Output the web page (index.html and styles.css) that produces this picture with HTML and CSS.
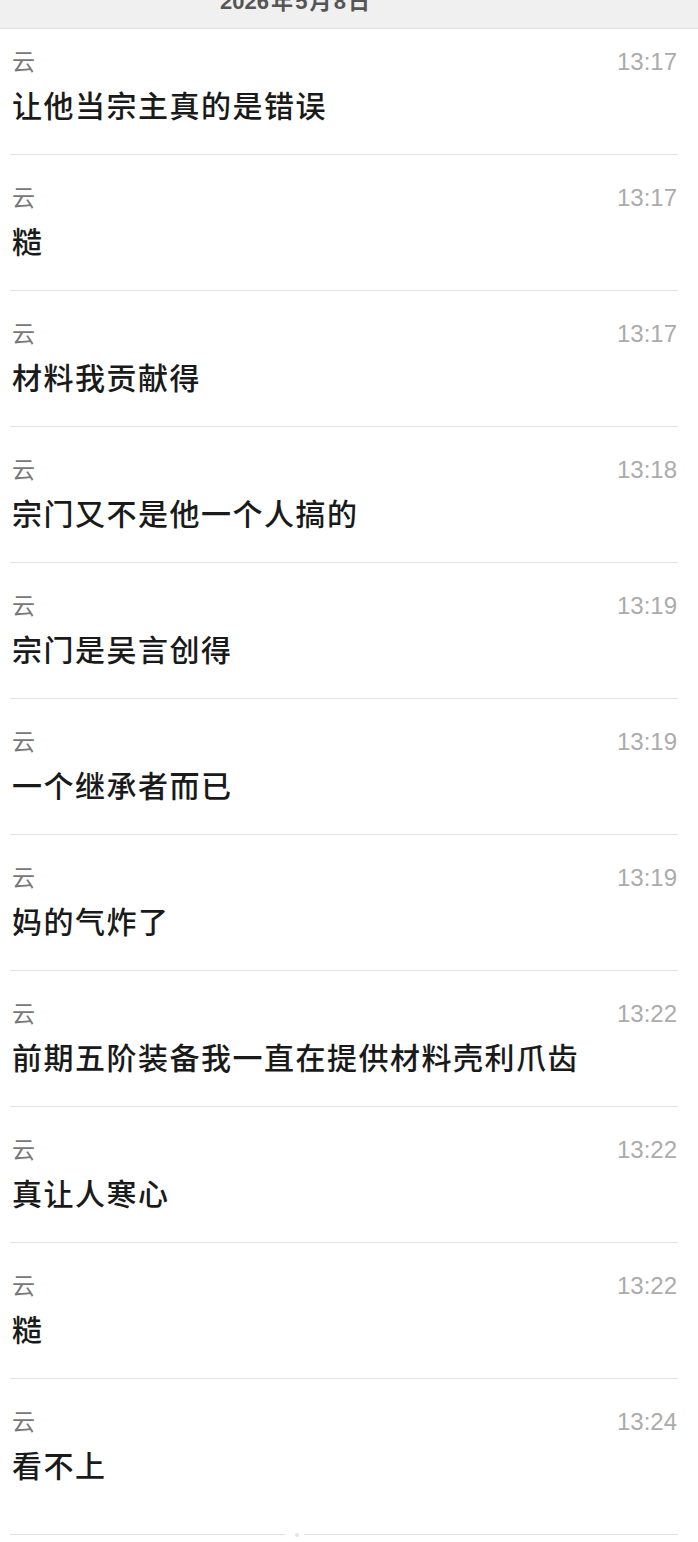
FILE: index.html
```html
<!DOCTYPE html>
<html lang="zh-CN">
<head>
<meta charset="UTF-8">
<title>聊天记录</title>
<link rel="stylesheet" href="styles.css">
</head>
<body>

<div class="date-bar">
    <div class="date-text">2026 年 5 月 8 日</div>
</div>

<div class="list">
    <div class="msg first">
        <div class="meta"><span class="name">云</span><span class="time">13:17</span></div>
        <div class="text">让他当宗主真的是错误</div>
    </div>
    <div class="msg">
        <div class="meta"><span class="name">云</span><span class="time">13:17</span></div>
        <div class="text">糙</div>
    </div>
    <div class="msg">
        <div class="meta"><span class="name">云</span><span class="time">13:17</span></div>
        <div class="text">材料我贡献得</div>
    </div>
    <div class="msg">
        <div class="meta"><span class="name">云</span><span class="time">13:18</span></div>
        <div class="text">宗门又不是他一个人搞的</div>
    </div>
    <div class="msg">
        <div class="meta"><span class="name">云</span><span class="time">13:19</span></div>
        <div class="text">宗门是吴言创得</div>
    </div>
    <div class="msg">
        <div class="meta"><span class="name">云</span><span class="time">13:19</span></div>
        <div class="text">一个继承者而已</div>
    </div>
    <div class="msg">
        <div class="meta"><span class="name">云</span><span class="time">13:19</span></div>
        <div class="text">妈的气炸了</div>
    </div>
    <div class="msg">
        <div class="meta"><span class="name">云</span><span class="time">13:22</span></div>
        <div class="text">前期五阶装备我一直在提供材料壳利爪齿</div>
    </div>
    <div class="msg">
        <div class="meta"><span class="name">云</span><span class="time">13:22</span></div>
        <div class="text">真让人寒心</div>
    </div>
    <div class="msg">
        <div class="meta"><span class="name">云</span><span class="time">13:22</span></div>
        <div class="text">糙</div>
    </div>
    <div class="msg last">
        <div class="meta"><span class="name">云</span><span class="time">13:24</span></div>
        <div class="text">看不上</div>
    </div>

    <div class="end-line">
        <span class="rule"></span>
        <span class="dot"></span>
        <span class="rule right"></span>
    </div>
</div>

</body>
</html>
```

FILE: styles.css
```css
body {
    margin: 0;
    padding: 0;
    background: #fff;
    font-family: "Liberation Sans", "Noto Sans CJK SC", sans-serif;
}

.date-bar {
    height: 28px;
    overflow: hidden;
    background: #f0f0f0;
    border-bottom: 1px solid #dedede;
    text-align: center;
    padding-right: 108px;
}

.date-text {
    margin-top: -13px;
    font-size: 22px;
    line-height: 30px;
    font-weight: bold;
    word-spacing: -4px;
    color: #555;
}

.list {
    margin: 0 20px 0 10px;
}

.msg {
    padding: 28px 1px 27px 2px;
    border-bottom: 1px solid #e2e2e2;
}

.msg.first { padding-top: 18px; }
.msg.last { padding-bottom: 45px; border-bottom: none; }

.meta {
    display: flex;
    justify-content: space-between;
    align-items: center;
    height: 30px;
    line-height: 30px;
}

.name {
    font-size: 23px;
    color: #777;
}

.time {
    font-size: 24px;
    color: #ababab;
}

.text {
    margin-top: 10px;
    font-size: 30px;
    line-height: 40px;
    font-weight: 500;
    letter-spacing: 1.5px;
    color: #1a1a1a;
}

.end-line {
    display: flex;
    align-items: center;
    height: 5px;
}

.rule {
    width: 275px;
    height: 1px;
    background: #e2e2e2;
}

.rule.right { flex: 1; }

.dot {
    width: 4px;
    height: 4px;
    margin: 0 5px 0 10px;
    border-radius: 50%;
    background: #e4e4e4;
}
```
